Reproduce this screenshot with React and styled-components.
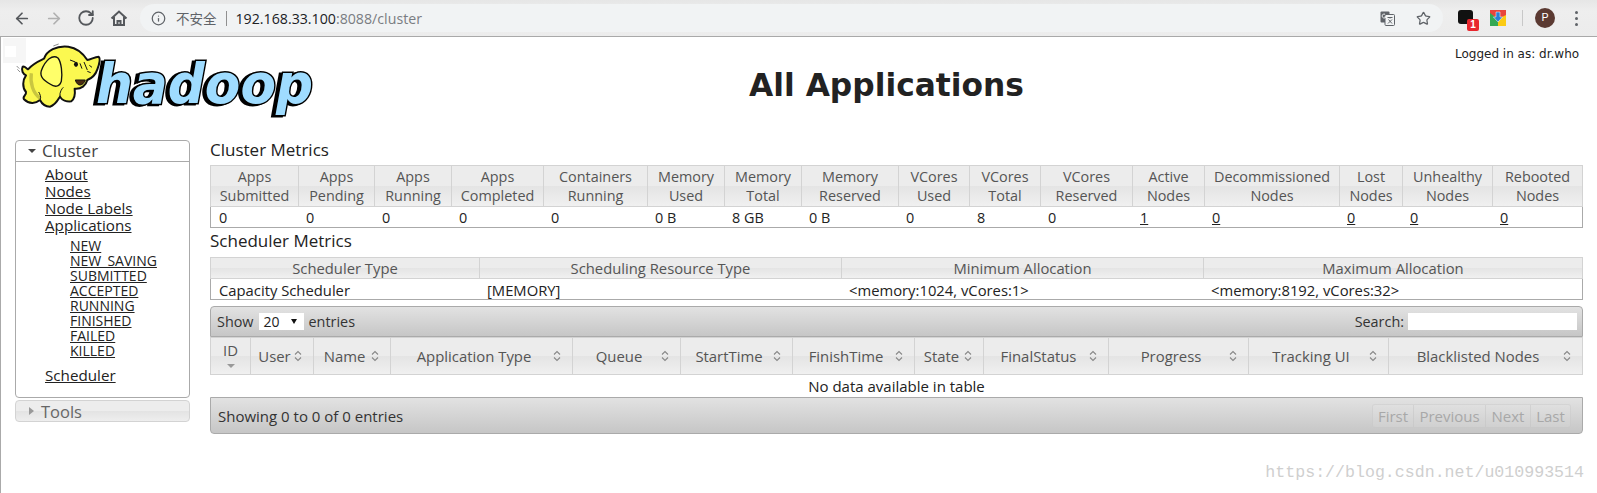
import React from "react";
import styled, { createGlobalStyle } from "styled-components";
import { ArrowLeft, ArrowRight, RotateCw, Star, Info } from "lucide-react";

const Global = createGlobalStyle`
  html, body { margin: 0; padding: 0; background: #fff; }
  body { font-family: "Open Sans", "Noto Sans CJK SC", sans-serif; font-size: 15px; color: #222; overflow: hidden; }
`;

const Page = styled.div`
  width: 1597px;
  height: 493px;
  position: relative;
  overflow: hidden;
`;

/* Browser chrome */
const Chrome = styled.header`
  height: 36px;
  display: flex;
  align-items: center;
  background: linear-gradient(#e6e6e6, #eeeeee 30%, #ececec);
  border-bottom: 1px solid #a9a9a9;
  padding-left: 13px;
  padding-right: 11px;
`;
const NavButton = styled.span`
  width: 18px;
  height: 18px;
  margin-left: ${p => p.$ml || 0}px;
  margin-right: ${p => p.$mr ?? 14}px;
  display: flex;
  align-items: center;
  justify-content: center;
  color: ${p => (p.$off ? "#b0b0b0" : "#55585c")};
`;
const Omnibox = styled.div`
  width: 1303px;
  height: 28px;
  border-radius: 14px;
  background: #f1f3f4;
  display: flex;
  align-items: center;
  padding: 0 12px 0 11px;
  box-sizing: border-box;
`;
const Insecure = styled.span`
  margin-left: 10px;
  color: #5f6368;
  font-size: 13.5px;
  font-family: "Noto Sans CJK SC", sans-serif;
`;
const UrlDivider = styled.span`
  width: 1px;
  height: 15px;
  background: #909090;
  margin: 0 9px;
`;
const UrlHost = styled.span`
  color: #202124;
  font-family: "Open Sans", sans-serif;
  font-size: 14.2px;
`;
const UrlRest = styled.span`
  color: #7a7d82;
  font-family: "Open Sans", sans-serif;
  font-size: 14.2px;
`;
const OmniSpacer = styled.span`
  flex: 1;
`;
const OmniIcon = styled.span`
  display: flex;
  margin-left: ${p => p.$gap || 0}px;
  color: #5f6368;
`;
const ExtWrap = styled.span`
  position: relative;
  display: block;
  width: 16px;
  height: 16px;
  margin-left: ${p => p.$gap}px;
`;
const ExtBlack = styled.span`
  display: block;
  width: 15px;
  height: 14px;
  background: #111;
  border-radius: 3px;
`;
const Badge = styled.span`
  position: absolute;
  left: 9px;
  top: 9px;
  width: 12px;
  height: 12px;
  border-radius: 2px;
  background: #e8262d;
  color: #fff;
  font: bold 10px/12px "Liberation Sans", sans-serif;
  text-align: center;
`;
const ToolDivider = styled.span`
  width: 1px;
  height: 16px;
  background: #c8c8c8;
  margin-left: 16px;
`;
const Avatar = styled.span`
  width: 20px;
  height: 20px;
  margin-left: 12px;
  border-radius: 50%;
  background: #5b3a32;
  color: #fff;
  font: 11px/20px "Roboto", sans-serif;
  text-align: center;
`;
const Dots = styled.span`
  display: flex;
  flex-direction: column;
  gap: 3px;
  margin-left: 20px;
  & > i {
    display: block;
    width: 3px;
    height: 3px;
    border-radius: 50%;
    background: #5f6368;
  }
`;

/* Page body */
const Body = styled.div`
  height: 456px;
  border-left: 1px solid #aaaaaa;
  box-sizing: border-box;
`;
const FaintSquare = styled.span`
  position: absolute;
  left: 3px;
  top: 38px;
  width: 23px;
  height: 25px;
  background: #f6f6f6;
  &::after {
    content: "";
    position: absolute;
    left: 2px;
    top: 8px;
    width: 11px;
    height: 11px;
    background: #fff;
  }
`;
const Head = styled.div`
  height: 103px;
  display: flex;
  padding-left: 17px;
  padding-right: 14px;
`;
const Logo = styled.svg`
  width: 296px;
  height: 75px;
  margin-top: 7px;
  overflow: visible;
  flex: none;
`;
const Title = styled.h1`
  flex: 1;
  margin: 28px 0 0;
  padding-left: 4px;
  text-align: center;
  font: bold 31.3px/40px "DejaVu Sans", sans-serif;
  color: #222;
`;
const LoggedIn = styled.div`
  font: 12px/16px "DejaVu Sans", sans-serif;
  color: #222;
  margin-top: 9px;
  width: 128px;
  white-space: nowrap;
`;
const Main = styled.div`
  display: flex;
  padding-left: 14px;
  padding-right: 14px;
`;

/* Side navigation */
const Side = styled.nav`
  width: 175px;
  flex: none;
  margin-right: 20px;
  display: flex;
  flex-direction: column;
  gap: 2px;
`;
const Panel = styled.div`
  border: 1px solid #aaa;
  border-radius: 4px;
  height: 258px;
  box-sizing: border-box;
  overflow: hidden;
`;
const PanelHead = styled.div`
  height: 21px;
  border-bottom: 1px solid #aaa;
  display: flex;
  align-items: center;
  padding-left: 12px;
  padding-bottom: 1px;
  box-sizing: border-box;
  font-size: 17px;
  line-height: 19px;
  color: #444;
`;
const ToolsHead = styled.div`
  height: 22px;
  box-sizing: border-box;
  border: 1px solid #d3d3d3;
  border-radius: 4px;
  display: flex;
  align-items: center;
  padding-left: 13px;
  font-size: 16.5px;
  color: #666;
  background: linear-gradient(#ededed 0 50%, #e3e3e3 50%, #eeeeee);
`;
const Tri = styled.span`
  width: 0;
  height: 0;
  margin-right: ${p => p.$mr}px;
  border-style: solid;
  ${p =>
    p.$right
      ? "border-width: 4px 0 4px 5px; border-color: transparent transparent transparent #999;"
      : "border-width: 4px 4px 0 4px; border-color: #444 transparent transparent transparent;"}
`;
const NavList = styled.ul`
  list-style: none;
  margin: 0;
  padding: 4px 0 0 29px;
  font-size: 15.2px;
  line-height: 17px;
`;
const SubList = styled.ul`
  list-style: none;
  margin: 4px 0 9px;
  padding: 0 0 0 25px;
  font-size: 14px;
  line-height: 15px;
`;
const NavLink = styled.a`
  color: #222;
  text-decoration: underline;
`;

/* Content */
const Content = styled.main`
  width: 1373px;
  flex: none;
`;
const MetricsTitle = styled.h3`
  margin: 0;
  height: ${p => p.$h}px;
  font-size: 17px;
  line-height: 20px;
  font-weight: 400;
  color: #222;
  padding-top: ${p => p.$top}px;
  box-sizing: border-box;
`;
const Table = styled.table`
  width: 1373px;
  table-layout: fixed;
  border-collapse: separate;
  border-spacing: 0;
  font-size: ${p => p.$fs}px;
`;
const Col = styled.col`
  width: ${p => p.$w}px;
`;
const Th = styled.th`
  box-sizing: border-box;
  height: ${p => p.$h}px;
  padding: 0 2px;
  font-weight: 400;
  line-height: 19px;
  color: #555;
  border-top: 1px solid #d3d3d3;
  border-bottom: 1px solid #d3d3d3;
  border-left: 1px solid #d3d3d3;
  &:last-child { border-right: 1px solid #d3d3d3; }
  background: linear-gradient(#ececec 0 50%, #e4e4e4 50%, #f0f0f0);
  overflow: hidden;
  white-space: nowrap;
`;
const Td = styled.td`
  box-sizing: border-box;
  height: 21px;
  padding: 2px 0 0 8px;
  line-height: 18px;
  color: #222;
  border-bottom: 1px solid #aaa;
  &:first-child { border-left: 1px solid #aaa; }
  &:last-child { border-right: 1px solid #aaa; }
  white-space: nowrap;
`;
const CellLink = styled.a`
  color: #222;
  text-decoration: underline;
`;

const Bar = styled.div`
  box-sizing: border-box;
  display: flex;
  align-items: center;
  justify-content: space-between;
  height: ${p => p.$h}px;
  margin-top: ${p => p.$mt || 0}px;
  padding: 0 5px 0 ${p => p.$pl || 7}px;
  border: 1px solid #aaa;
  border-radius: ${p => p.$radius};
  background: linear-gradient(#e2e2e2, #c6c6c6);
  color: #333;
  font-size: ${p => p.$fs}px;
`;
const BarGroup = styled.div`
  display: flex;
  align-items: center;
`;
const FakeSelect = styled.span`
  width: 45px;
  height: 17px;
  background: #fff;
  margin: 0 5px;
  padding: 0 5px;
  box-sizing: border-box;
  display: flex;
  align-items: center;
  justify-content: space-between;
  color: #222;
  font-size: 14px;
`;
const SelectArrow = styled.span`
  width: 0;
  height: 0;
  border-style: solid;
  border-width: 5px 3px 0 3px;
  border-color: #111 transparent transparent transparent;
  margin-right: 2px;
`;
const SearchInput = styled.input`
  width: 169px;
  height: 17px;
  box-sizing: border-box;
  border: 0;
  background: #fff;
  margin-left: 4px;
  padding: 0;
`;
const SortCell = styled.div`
  display: flex;
  align-items: center;
  padding: 0 8px 0 3px;
`;
const SortLabel = styled.span`
  flex: 1;
  text-align: center;
`;
const IdCell = styled.div`
  display: flex;
  flex-direction: column;
  align-items: center;
  line-height: 19px;
`;
const SortDown = styled.span`
  display: block;
  width: 0;
  height: 0;
  margin-top: 4px;
  margin-bottom: 4px;
  border-style: solid;
  border-width: 4px 4px 0 4px;
  border-color: #999 transparent transparent transparent;
`;
const EmptyRow = styled.div`
  box-sizing: border-box;
  height: 22px;
  line-height: 23px;
  text-align: center;
  color: #222;
`;
const Pager = styled.div`
  display: flex;
  height: 24px;
  border-radius: 3px;
  background: rgba(255, 255, 255, 0.1);
  margin-right: 6px;
  border: 1px solid rgba(190, 190, 190, 0.35);
  box-sizing: border-box;
`;
const PageBtn = styled.span`
  width: ${p => p.$w}px;
  text-align: center;
  line-height: 22px;
  color: #a8a8a8;
  box-sizing: border-box;
  &:not(:last-child) { border-right: 1px solid rgba(190, 190, 190, 0.4); }
`;
const Watermark = styled.span`
  position: absolute;
  right: 13px;
  top: 463px;
  font: 16.6px/20px "Liberation Mono", monospace;
  color: #cfcfcf;
  white-space: nowrap;
`;

const metricsCols = [88, 76, 77, 92, 104, 77, 77, 97, 71, 71, 92, 72, 135, 63, 90, 91];
const metricsHead = [
  ["Apps", "Submitted"], ["Apps", "Pending"], ["Apps", "Running"], ["Apps", "Completed"],
  ["Containers", "Running"], ["Memory", "Used"], ["Memory", "Total"], ["Memory", "Reserved"],
  ["VCores", "Used"], ["VCores", "Total"], ["VCores", "Reserved"], ["Active", "Nodes"],
  ["Decommissioned", "Nodes"], ["Lost", "Nodes"], ["Unhealthy", "Nodes"], ["Rebooted", "Nodes"],
];
const metricsBody = ["0", "0", "0", "0", "0", "0 B", "8 GB", "0 B", "0", "8", "0"];
const nodeLinks = ["1", "0", "0", "0", "0"];
const schedCols = [269, 362, 362, 380];
const schedHead = ["Scheduler Type", "Scheduling Resource Type", "Minimum Allocation", "Maximum Allocation"];
const schedBody = ["Capacity Scheduler", "[MEMORY]", "<memory:1024, vCores:1>", "<memory:8192, vCores:32>"];
const appCols = [40, 63, 77, 182, 108, 112, 122, 69, 125, 140, 140, 195];
const appHead = ["User", "Name", "Application Type", "Queue", "StartTime", "FinishTime", "State", "FinalStatus", "Progress", "Tracking UI", "Blacklisted Nodes"];
const subLinks = ["NEW", "NEW_SAVING", "SUBMITTED", "ACCEPTED", "RUNNING", "FINISHED", "FAILED", "KILLED"];

const SortIcon = () => (
  <svg width="10" height="12" viewBox="0 0 10 12" fill="none" stroke="#888" strokeWidth="1.1">
    <path d="M2 4.5 5 1.5 8 4.5M2 7.5 5 10.5 8 7.5" />
  </svg>
);

const HomeIcon = () => (
  <svg width="18" height="18" viewBox="0 0 18 18" fill="none" stroke="#55585c" strokeWidth="2">
    <path d="M1.5 9.5 9 2.5l7.5 7M4 8v8h10V8M7.5 16v-4h3v4" />
  </svg>
);

const TranslateIcon = () => (
  <svg width="15" height="15" viewBox="0 0 15 15">
    <rect x="0.5" y="0.5" width="9" height="11" rx="1" fill="#5f6368" />
    <rect x="5" y="3.5" width="9.5" height="11" rx="1" fill="#f1f3f4" stroke="#5f6368" />
    <path d="M7.5 6.5h5M10 6.5v1M8 12.5l4-4M8.5 8.5l3.5 4" stroke="#5f6368" fill="none" />
    <path d="M5 3.2a2 2 0 1 0 1 2.6H4.6" stroke="#f1f3f4" fill="none" />
  </svg>
);

const ChromeExt = () => (
  <svg width="16" height="16" viewBox="0 0 16 16">
    <rect width="16" height="16" fill="#e8453c" />
    <path d="M0 3 8 9v7H0z" fill="#34a853" />
    <path d="M16 5 8 9v7h8z" fill="#fbcb14" />
    <path d="M6 2h4v5h2.6L8 12 3.4 7H6z" fill="#2a7fd5" stroke="#fff" strokeWidth="0.5" />
  </svg>
);

const LogoText = styled.text`
  font-family: "DejaVu Sans", sans-serif;
  font-weight: bold;
  font-style: italic;
  font-size: 55px;
  paint-order: stroke;
  filter: drop-shadow(-3px 1.5px 0 #000);
`;

const HadoopLogo = () => (
  <Logo viewBox="0 0 296 75">
    <LogoText x="78" y="59" textLength="217" lengthAdjust="spacingAndGlyphs" fill="#9fdcff" stroke="#000" strokeWidth="3">hadoop</LogoText>
    <g transform="translate(-18 -44) scale(.3333)">
      <path
        d="M84 208C100 190 115 184 132 176C140 152 170 136 205 140C232 144 248 158 262 180C272 180 284 170 296 170C303 176 298 192 292 208C286 226 272 236 262 240C258 256 244 268 224 266C226 282 224 296 214 304C200 306 186 300 180 290C174 300 166 316 150 320C136 320 126 312 120 300C108 310 88 314 72 298C66 290 80 286 78 276C66 262 68 240 78 226C70 222 62 212 68 200C74 198 78 204 84 208Z"
        fill="#fbf850" stroke="#111" strokeWidth="6" strokeLinejoin="round"
      />
      <path d="M94 220C90 248 98 280 122 296" fill="none" stroke="#c9c640" strokeWidth="10" />
      <path d="M124 212C136 180 158 162 174 174C184 186 188 222 184 244C178 262 164 262 150 252C134 242 118 232 124 212Z" fill="#ffff6a" stroke="#111" strokeWidth="4" />
      <ellipse cx="228" cy="193" rx="6" ry="8" fill="#111" />
      <path d="M210 180 226 186M252 186 262 210M240 190 246 206M268 196 276 202M262 214 272 218" stroke="#111" strokeWidth="3" fill="none" />
      <path d="M226 240C232 262 250 258 256 240Z" fill="#4a2a10" stroke="#111" strokeWidth="3" />
      <path d="M180 290C178 276 186 266 190 262M120 300C124 290 120 282 116 276" stroke="#111" strokeWidth="3" fill="none" />
      <path d="M160 138 176 132M50 198 58 206M52 208 60 216" stroke="#555" strokeWidth="2" fill="none" />
    </g>
  </Logo>
);

export default function App() {
  return (
    <Page>
      <Global />
      <Chrome>
        <NavButton><ArrowLeft size={21} strokeWidth={2.3} /></NavButton>
        <NavButton $off><ArrowRight size={21} strokeWidth={2.3} /></NavButton>
        <NavButton><RotateCw size={18} strokeWidth={2.4} /></NavButton>
        <NavButton $ml={1} $mr={12}><HomeIcon /></NavButton>
        <Omnibox>
          <OmniIcon><Info size={15} strokeWidth={2} /></OmniIcon>
          <Insecure>不安全</Insecure>
          <UrlDivider />
          <UrlHost>192.168.33.100</UrlHost>
          <UrlRest>:8088/cluster</UrlRest>
          <OmniSpacer />
          <OmniIcon><TranslateIcon /></OmniIcon>
          <OmniIcon $gap={21}><Star size={15} strokeWidth={2} /></OmniIcon>
        </Omnibox>
        <ExtWrap $gap={15}><ExtBlack /><Badge>1</Badge></ExtWrap>
        <ExtWrap $gap={16}><ChromeExt /></ExtWrap>
        <ToolDivider />
        <Avatar>P</Avatar>
        <Dots><i /><i /><i /></Dots>
      </Chrome>
      <Body>
        <Head>
          <HadoopLogo />
          <Title>All Applications</Title>
          <LoggedIn>Logged in as: dr.who</LoggedIn>
        </Head>
        <Main>
          <Side>
            <Panel>
              <PanelHead><Tri $mr={6} />Cluster</PanelHead>
              <NavList>
                <li><NavLink>About</NavLink></li>
                <li><NavLink>Nodes</NavLink></li>
                <li><NavLink>Node Labels</NavLink></li>
                <li>
                  <NavLink>Applications</NavLink>
                  <SubList>
                    {subLinks.map(s => <li key={s}><NavLink>{s}</NavLink></li>)}
                  </SubList>
                </li>
                <li><NavLink>Scheduler</NavLink></li>
              </NavList>
            </Panel>
            <ToolsHead><Tri $right $mr={7} />Tools</ToolsHead>
          </Side>
          <Content>
            <MetricsTitle $h={25} $top={0}>Cluster Metrics</MetricsTitle>
            <Table $fs={14.4}>
              <colgroup>{metricsCols.map((w, i) => <Col key={i} $w={w} />)}</colgroup>
              <thead>
                <tr>{metricsHead.map(([a, b]) => <Th key={a + b} $h={42}>{a}<br />{b}</Th>)}</tr>
              </thead>
              <tbody>
                <tr>
                  {metricsBody.map((v, i) => <Td key={i}>{v}</Td>)}
                  {nodeLinks.map((v, i) => <Td key={i}><CellLink>{v}</CellLink></Td>)}
                </tr>
              </tbody>
            </Table>
            <MetricsTitle $h={29} $top={3}>Scheduler Metrics</MetricsTitle>
            <Table $fs={14.8}>
              <colgroup>{schedCols.map((w, i) => <Col key={i} $w={w} />)}</colgroup>
              <thead>
                <tr>{schedHead.map(h => <Th key={h} $h={22}>{h}</Th>)}</tr>
              </thead>
              <tbody>
                <tr>{schedBody.map(h => <Td key={h}>{h}</Td>)}</tr>
              </tbody>
            </Table>
            <Bar $h={31} $mt={6} $fs={14.4} $pl={6} $radius="4px 4px 0 0">
              <BarGroup>Show<FakeSelect>20<SelectArrow /></FakeSelect>entries</BarGroup>
              <BarGroup>Search:<SearchInput /></BarGroup>
            </Bar>
            <Table $fs={14.9}>
              <colgroup>{appCols.map((w, i) => <Col key={i} $w={w} />)}</colgroup>
              <thead>
                <tr>
                  <Th $h={38}><IdCell>ID<SortDown /></IdCell></Th>
                  {appHead.map(h => (
                    <Th key={h} $h={38}>
                      <SortCell><SortLabel>{h}</SortLabel><SortIcon /></SortCell>
                    </Th>
                  ))}
                </tr>
              </thead>
            </Table>
            <EmptyRow>No data available in table</EmptyRow>
            <Bar $h={37} $fs={15} $radius="0 0 4px 4px">
              <BarGroup>Showing 0 to 0 of 0 entries</BarGroup>
              <Pager>
                <PageBtn $w={41}>First</PageBtn>
                <PageBtn $w={72}>Previous</PageBtn>
                <PageBtn $w={45}>Next</PageBtn>
                <PageBtn $w={39}>Last</PageBtn>
              </Pager>
            </Bar>
          </Content>
        </Main>
      </Body>
      <FaintSquare />
      <Watermark>https://blog.csdn.net/u010993514</Watermark>
    </Page>
  );
}
